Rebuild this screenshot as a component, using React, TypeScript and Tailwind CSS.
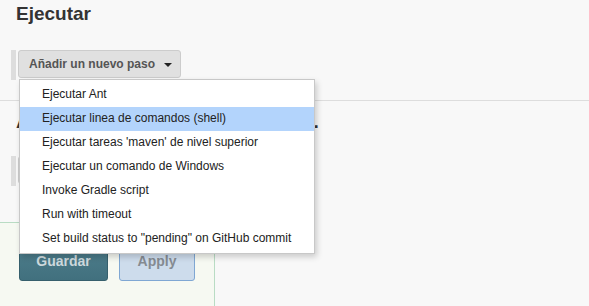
const pasos = [
  'Ejecutar Ant',
  'Ejecutar linea de comandos (shell)',
  "Ejecutar tareas 'maven' de nivel superior",
  'Ejecutar un comando de Windows',
  'Invoke Gradle script',
  'Run with timeout',
  'Set build status to "pending" on GitHub commit',
];

function AddStep({ label }: { label: string }) {
  return (
    <div className="ml-[11px] flex h-[30px] items-start">
      <div className="h-[30px] w-[5px] bg-[#dddddd]" />
      <button className="ml-[2px] flex h-[28px] items-center gap-[9px] rounded-[3px] border border-[#cccccc] bg-[#e0e0e0] pl-[10px] pr-[8px] text-[12px] font-bold text-[#555555]">
        {label}
        <svg width="8" height="4" viewBox="0 0 8 4" className="mt-[1px]">
          <path d="M0 0h8L4 4z" fill="#222" />
        </svg>
      </button>
    </div>
  );
}

export default function App() {
  return (
    <div className="relative h-[306px] w-[589px] overflow-hidden bg-[#f8f8f8] font-['Liberation_Sans',Arial,sans-serif]">
      <h1 className="pl-4 pt-[2px] text-[19px] font-bold leading-6 text-[#333333]">Ejecutar</h1>

      <div className="mt-[24px]">
        <AddStep label="Añadir un nuevo paso" />
      </div>

      <div className="mt-[20px] border-t border-[#dddddd]" />

      <h2 className="pl-4 pt-[9px] text-[19px] font-bold leading-6 tracking-[0.24px] text-[#333333]">
        Acciones para ejecutar después.
      </h2>

      <div className="mt-[22px]">
        <AddStep label="Añadir una acción" />
      </div>

      <div className="mt-[36px] h-[100px] w-[215px] border-r border-t border-[#b9dcc4] bg-[#f6f9f2] pl-[19px] pt-[18px]">
        <div className="flex gap-[11px]">
          <button className="h-[40px] w-[89px] rounded-[3px] border border-[#36606d] bg-gradient-to-b from-[#4f7f8d] to-[#41707e] text-[14px] font-bold text-[#cdd9dd]">
            Guardar
          </button>
          <button className="h-[40px] w-[76px] rounded-[3px] border border-[#7fa7d3] bg-[#cddcec] text-[14px] font-bold text-[#858b92]">
            Apply
          </button>
        </div>
      </div>

      {/* menu desplegable */}
      <ul className="absolute left-[19px] top-[79px] w-[296px] border border-[#c8c8c8] bg-white pb-[2px] pt-[3px] shadow-[2px_3px_6px_rgba(0,0,0,0.18)]">
        {pasos.map((p, i) => (
          <li
            key={p}
            className={`flex h-[24px] items-center pb-[2px] pl-[22px] text-[12px] text-[#222222] ${i === 1 ? 'bg-[#b3d4fc]' : ''}`}
          >
            {p}
          </li>
        ))}
      </ul>
    </div>
  );
}
